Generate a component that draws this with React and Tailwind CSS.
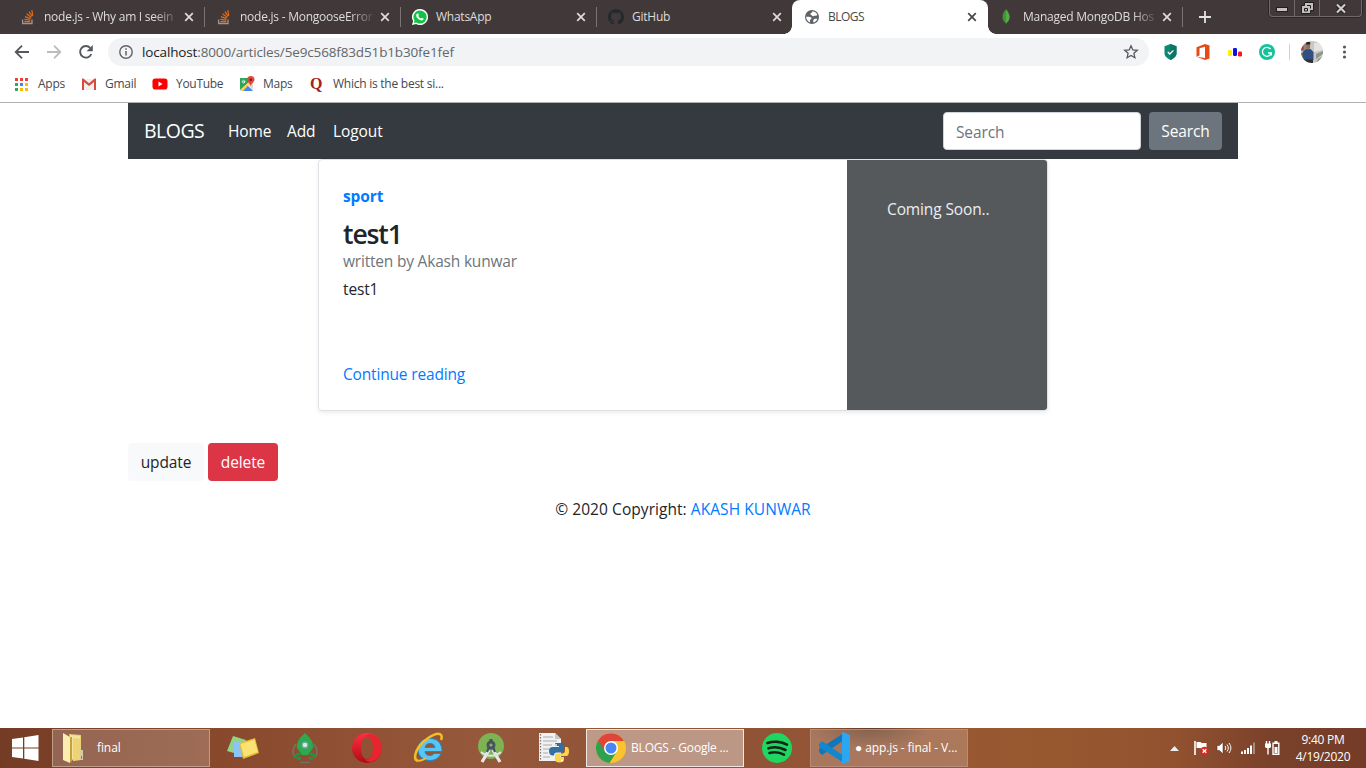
import React from "react";

const X = ({ className }) => (
  <svg className={className} viewBox="0 0 10 10" width="10" height="10">
    <path d="M1.2 1.2l7.6 7.6M8.8 1.2L1.2 8.8" stroke="currentColor" strokeWidth="1.7" />
  </svg>
);

const StackIcon = () => (
  <svg width="16" height="16" viewBox="0 0 16 16">
    <path d="M2.6 10.5v4h9.4v-4" fill="none" stroke="#9a9693" strokeWidth="1.3" />
    <path d="M4.3 12.6h6M4.4 10.4l6 .8M5 7.6l5.6 2M6.6 4.8l4.7 3.6M9 2.6l3.2 4.8M11.8 1.2l1 5.4" stroke="#e06c1c" strokeWidth="1.2" fill="none" />
  </svg>
);

const WhatsAppIcon = () => (
  <svg width="16" height="16" viewBox="0 0 24 24">
    <path d="M12 0a12 12 0 0 0-10.300 18.100L0 24l6.100-1.600A12 12 0 1 0 12 0z" fill="#fff" />
    <path d="M12 2.200a9.800 9.800 0 0 0-8.200 15.200l-1 3.700 3.800-1A9.800 9.800 0 1 0 12 2.200z" fill="#12c245" />
    <path d="M8.300 6.600c.6-.3 1 0 1.200.5l.8 1.900c.1.500-.8 1.200-.9 1.600.7 1.700 2.200 3 4 3.700.5 0 1-1.200 1.500-1.300l2.200 1.100c.5.300.2 1.500-.2 2-1 1-2.500 1.200-3.900.7-3.300-1.100-5.800-3.500-6.700-6.400-.3-1.500.5-3 2-3.800z" fill="#fff" />
  </svg>
);

const GitHubIcon = () => (
  <svg width="16" height="16" viewBox="0 0 16 16">
    <path
      fill="#24292e"
      d="M8 0C3.580 0 0 3.580 0 8c0 3.540 2.290 6.530 5.470 7.590.4.070.55-.17.55-.38 0-.19-.01-.82-.01-1.490-2.010.37-2.530-.49-2.690-.94-.09-.23-.48-.94-.82-1.130-.28-.15-.68-.52-.01-.53.63-.01 1.080.58 1.230.82.72 1.210 1.870.87 2.330.66.070-.52.28-.87.51-1.070-1.780-.2-3.640-.89-3.640-3.950 0-.87.31-1.590.82-2.150-.08-.2-.36-1.020.08-2.120 0 0 .67-.21 2.200.82A7.600 7.600 0 0 1 8 3.860c.68 0 1.360.09 2 .27 1.530-1.040 2.200-.82 2.200-.82.44 1.100.16 1.920.08 2.120.51.56.82 1.270.82 2.150 0 3.070-1.870 3.750-3.650 3.950.29.25.54.73.54 1.480 0 1.070-.01 1.930-.01 2.200 0 .21.15.46.55.38A8 8 0 0 0 16 8c0-4.420-3.580-8-8-8z"
    />
  </svg>
);

const GlobeIcon = () => (
  <svg width="16" height="16" viewBox="0 0 16 16">
    <circle cx="8" cy="8" r="7" fill="#5f6368" />
    <path d="M8.800 2.200c2 .3 3.600 1.500 4.400 3.200-.4 1.300-1.200 1.500-2 1.300-1-.2-1.200.6-2.200.6C7.800 7.200 7.900 6 6.900 5.800c-.9-.3-.6-1.500.3-1.800.9-.3.7-1.300 1.600-1.800z" fill="#fff" />
    <path d="M2.100 7.800c1.300-.2 4.300-.3 5.200.8.700 1-.2 1.600-.9 2-.7.500-.3 1.500-.3 2.800C3.800 12.700 2.200 10.500 2.100 7.800zM10 10.300c1.400-.8 2.600-.6 3.300-.3-.6 1.600-1.900 2.900-3.500 3.500-.8-1-.9-2.500.2-3.200z" fill="#fff" />
  </svg>
);

const MongoIcon = () => (
  <svg width="16" height="16" viewBox="0 0 16 16">
    <path d="M7 .3C5.300 2.400 3.500 4.500 3.500 8c0 3 1.700 4.800 3.200 6l.3 1.700.3-1.700c1.500-1.200 3.200-3 3.200-6C10.500 4.500 8.200 2.400 7 .3z" fill="#419437" />
    <path d="M7 .3v15.400l.3-1.700c1.500-1.200 3.200-3 3.200-6C10.500 4.500 8.200 2.400 7 .3z" fill="#57ab47" />
  </svg>
);

const tabs = [
  { title: "node.js - Why am I seein", icon: <StackIcon />, fit: "tracking-[-0.25px]", fade: true },
  { title: "node.js - MongooseError", icon: <StackIcon />, fit: "tracking-[-0.25px]", fade: true },
  { title: "WhatsApp", icon: <WhatsAppIcon />, fit: "tracking-[-0.25px]" },
  { title: "GitHub", icon: <GitHubIcon />, fit: "tracking-[-0.25px]" },
  { title: "BLOGS", icon: <GlobeIcon />, active: true, fit: "tracking-[-0.5px]" },
  { title: "Managed MongoDB Hos", icon: <MongoIcon />, fit: "tracking-[-0.25px]", fade: true, last: true },
];

function Tab({ tab, divider }) {
  const base = "relative flex h-[34px] shrink-0 items-center";
  const box = tab.active
    ? "w-[196px] rounded-t-[8px] bg-white pl-3 text-[#45494d]"
    : tab.last
      ? "w-[195px] pl-[11px] text-[#dedcdb]"
      : "w-[196px] pl-3 text-[#dedcdb]";
  const label = tab.fade
    ? "ml-2 w-[133px] whitespace-nowrap text-[12px] leading-4 [mask-image:linear-gradient(to_right,#000_110px,transparent_136px)]"
    : "ml-2 w-[133px] whitespace-nowrap text-[12px] leading-4";
  return (
    <div className={`${base} ${box}`}>
      {tab.active && (
        <>
          <div className="absolute bottom-0 -left-2 size-2 bg-[radial-gradient(circle_at_0_0,#413939_7.5px,#fff_8px)]" />
          <div className="absolute -right-2 bottom-0 size-2 bg-[radial-gradient(circle_at_100%_0,#413939_7.5px,#fff_8px)]" />
        </>
      )}
      {tab.icon}
      <div className={label}>
        <span className={tab.fit}>{tab.title}</span>
      </div>
      <X className={tab.active || tab.last ? "ml-[6px] shrink-0" : "ml-[7px] shrink-0"} />
      {divider && <div className={tab.last ? "absolute right-0 top-[7px] h-5 w-px bg-[#7a7474]" : "absolute -right-px top-[7px] h-5 w-px bg-[#7a7474]"} />}
    </div>
  );
}

function WindowControls() {
  return (
    <div className="absolute right-1 top-0 flex h-[17px] w-[93px] rounded-b-[4px] border border-t-0 border-[#6f6a69] text-[#c9c7c6] shadow-[0_0_0_1px_#2c2727]">
      <div className="flex w-[25px] items-center justify-center border-r border-[#6f6a69] pt-[3px]">
        <svg width="12" height="5" viewBox="0 0 12 5"><rect x=".5" y=".5" width="11" height="4" fill="#c4c2c1" stroke="#221e1e" /></svg>
      </div>
      <div className="flex w-[25px] items-center justify-center border-r border-[#6f6a69] pr-px">
        <svg width="14" height="14" viewBox="0 0 14 14">
          <path d="M4.500 1.500h9v8h-3v3h-9v-8h3z" fill="#c4c2c1" stroke="#221e1e" />
          <path d="M4.500 7.500h3v2.500h-3zM7 4.500h3.500v3" fill="none" stroke="#221e1e" />
        </svg>
      </div>
      <div className="flex grow items-center justify-center">
        <svg width="12" height="11" viewBox="0 0 12 11">
          <path d="M2 1.500l8 8M10 1.500l-8 8" stroke="#221e1e" strokeWidth="4" />
          <path d="M2 1.500l8 8M10 1.500l-8 8" stroke="#d0cecd" strokeWidth="2.200" />
        </svg>
      </div>
    </div>
  );
}

function TabStrip() {
  return (
    <div className="relative flex h-[34px] bg-[#413939] pl-2">
      {tabs.map((t, i) => (
        <Tab key={i} tab={t} divider={i !== 3 && i !== 4} />
      ))}
      <div className="flex h-[34px] items-center pl-[16px]">
        <svg width="12" height="12" viewBox="0 0 12 12"><path d="M6 0v12M0 6h12" stroke="#e4e2e1" strokeWidth="1.800" /></svg>
      </div>
      <WindowControls />
    </div>
  );
}

function Toolbar() {
  return (
    <div className="flex h-9 items-center bg-white">
      <svg className="ml-[14px]" width="16" height="16" viewBox="0 0 16 16"><path d="M15 8H2M8 1.700L1.700 8 8 14.300" fill="none" stroke="#55595e" strokeWidth="1.800" /></svg>
      <svg className="ml-4" width="16" height="16" viewBox="0 0 16 16"><path d="M1 8h13M8 1.700L14.300 8 8 14.300" fill="none" stroke="#babcbe" strokeWidth="1.800" /></svg>
      <svg className="ml-4" width="16" height="16" viewBox="0 0 16 16">
        <path d="M13.300 10A5.800 5.800 0 1 1 12.300 4" fill="none" stroke="#55595e" strokeWidth="1.900" />
        <path d="M14.800 1v6.200H8.600z" fill="#55595e" />
      </svg>
      <div className="ml-[14px] flex h-7 w-[1041px] items-center rounded-full bg-[#f1f3f4] pl-[11px]">
        <svg width="14" height="14" viewBox="0 0 14 14">
          <circle cx="7" cy="7" r="6.200" fill="none" stroke="#5f6368" strokeWidth="1.400" />
          <path d="M7 6v4.500M7 3.300v1.500" stroke="#5f6368" strokeWidth="1.500" />
        </svg>
        <div className="ml-[9px] whitespace-nowrap text-[13.500px] leading-5 tracking-[-0.14px] text-[#63676b]">
          <span className="text-[#202124]">localhost</span>:8000/articles/5e9c568f83d51b1b30fe1fef
        </div>
        <svg className="ml-auto mr-[10px]" width="16" height="16" viewBox="0 0 16 16">
          <path d="M8 1.800l1.800 4.100 4.500.4-3.400 3 1 4.400L8 11.400l-3.900 2.300 1-4.400-3.400-3 4.500-.4z" fill="none" stroke="#55595e" strokeWidth="1.300" />
        </svg>
      </div>
      <svg className="ml-[13px]" width="16" height="16" viewBox="0 0 16 16">
        <path d="M8.500 0l6 2.300v7.200c0 3-3 5-6 6.500-3-1.500-6-3.500-6-6.500V2.300z" fill="#0f8873" />
        <path d="M8.500 0l6 2.300v7.200c0 3-3 5-6 6.500z" fill="#0b7664" />
        <path d="M5.800 8l2 2 3.600-3.600" stroke="#fff" strokeWidth="1.300" fill="none" />
      </svg>
      <svg className="ml-[17px]" width="16" height="16" viewBox="0 0 16 16">
        <path d="M1.500 3.300L10 0l4.500 1.400v13.200L10 16l-8.500-3.200L10 14V2.700L4.500 4.200v7.300l-3 1.300z" fill="#e64a19" />
      </svg>
      <svg className="ml-4" width="16" height="16" viewBox="0 0 16 16">
        <rect x="1" y="6" width="4" height="6" rx="1.200" fill="#ffee00" />
        <rect x="6" y="4" width="4" height="8" rx="1.200" fill="#0b12e8" />
        <rect x="11" y="7.500" width="4" height="5" rx="1.200" fill="#f01a20" />
      </svg>
      <svg className="ml-4" width="16" height="16" viewBox="0 0 16 16">
        <circle cx="8" cy="8" r="8" fill="#15c39a" />
        <path d="M11.500 5A4.500 4.500 0 1 0 12.300 9H9M12.300 8.300v3.200" fill="none" stroke="#fff" strokeWidth="1.300" />
      </svg>
      <div className="ml-[14px] h-4 w-px bg-[#cfd1d3]" />
      <svg className="ml-[11px]" width="22" height="22" viewBox="0 0 22 22">
        <clipPath id="avatar"><circle cx="11" cy="11" r="11" /></clipPath>
        <g clipPath="url(#avatar)">
          <path d="M0 0h22v22H0z" fill="#c8c9c3" />
          <path d="M0 0h6v10H0z" fill="#8b8978" />
          <path d="M13 2h9v7l-9 2z" fill="#e4e5e1" />
          <path d="M15 13l7-3v3l-7 5zM17 18l5-3v7h-7z" fill="#8f948c" />
          <path d="M0 12h4v10H0z" fill="#6b7361" />
          <path d="M0 5h2.500v4H0z" fill="#c22b50" />
          <path d="M1.500 11l4-3h4L12.500 11v8H2.500z" fill="#2f4f86" />
          <path d="M3 18.500h9V22H3z" fill="#30302f" />
          <path d="M5.500 3h3.500v4L7.500 9l-2-2z" fill="#9a6a52" />
          <path d="M5.200 1h4v2.500h-4z" fill="#2c2422" />
        </g>
      </svg>
      <svg className="ml-[13px]" width="16" height="16" viewBox="0 0 16 16" fill="#55595e">
        <circle cx="8.500" cy="3" r="1.600" /><circle cx="8.500" cy="8" r="1.600" /><circle cx="8.500" cy="13" r="1.600" />
      </svg>
    </div>
  );
}

function Bookmarks() {
  const colors = ["#ea4335", "#ea4335", "#ea4335", "#34a853", "#4285f4", "#fbbc05", "#34a853", "#fbbc05", "#fbbc05"];
  return (
    <div className="flex h-[33px] items-center whitespace-nowrap border-b border-[#b2b0b0] bg-white pb-[4px] text-[12px] leading-4 tracking-[-0.25px] text-[#45494d]">
      <div className="ml-[15px] grid grid-cols-3 gap-[2px]">
        {colors.map((c, i) => (
          <div key={i} className="size-[3px]" style={{ backgroundColor: c }} />
        ))}
      </div>
      <span className="ml-[10px] w-[27px]">Apps</span>
      <svg className="ml-4" width="16" height="16" viewBox="0 0 16 16">
        <path d="M1 3h14v11H1z" fill="#f0eeee" />
        <path d="M3 14V6l5 4 5-4v8h2V2.500h-1.300L8 7.300 2.300 2.500H1V14z" fill="#d54b3d" />
      </svg>
      <span className="ml-2 w-[31px]">Gmail</span>
      <svg className="ml-4" width="16" height="16" viewBox="0 0 16 16">
        <rect x=".5" y="2.500" width="15" height="11" rx="2.800" fill="#f00" /><path d="M6.500 5.600v4.800l4-2.400z" fill="#fff" />
      </svg>
      <span className="ml-2 w-[47px] tracking-[-0.3px]">YouTube</span>
      <svg className="ml-4" width="16" height="16" viewBox="0 0 16 16">
        <rect x="1" y="2" width="13" height="13" rx="1" fill="#e8eaea" />
        <path d="M1 2h9v4L1 14z" fill="#2da457" /><path d="M1.500 15L8 9l6 6z" fill="#4b84ee" /><path d="M2 13.500L12 4l1.300 1.300L4 15H2z" fill="#fbd24a" />
        <path d="M9.500 9l4.500 5V8z" fill="#d8dadb" />
        <path d="M11.800 0a3.700 3.700 0 0 0-3.700 3.800c0 2.300 3 3.500 3.700 6.400.7-2.900 3.700-4.100 3.700-6.400A3.700 3.700 0 0 0 11.800 0z" fill="#dd4b3e" />
        <circle cx="11.800" cy="3.700" r="1.300" fill="#7c1d18" />
        <path d="M6.500 5.300H5v.7h.8a1.300 1.300 0 1 1-.3-1.200" stroke="#fff" strokeWidth=".8" fill="none" />
      </svg>
      <span className="ml-2 w-[29px]">Maps</span>
      <div className="ml-4 mr-px flex size-4 items-center justify-center font-['Liberation_Serif',serif] text-[16px] font-bold text-[#a52218]">Q</div>
      <span className="ml-2">Which is the best si...</span>
    </div>
  );
}

function Page() {
  return (
    <div className="h-[625px] bg-white text-[15.500px] leading-6 tracking-[-0.13px] text-[#212529]">
      <div className="mx-auto w-[1110px]">
        <nav className="flex h-14 items-center bg-[#343a40] px-4 text-white">
          <span className="w-[60px] whitespace-nowrap text-[19.500px] leading-[30px] tracking-[-0.5px]">BLOGS</span>
          <span className="ml-6 w-[43px]">Home</span>
          <span className="ml-4 w-[29px]">Add</span>
          <span className="ml-[17px] grow tracking-[-0.1px]">Logout</span>
          <div className="h-[38px] w-[198px] rounded-[4px] border border-[#ced4da] bg-white px-3 pt-[7px] text-[#6c757d]">Search</div>
          <button className="ml-2 h-[38px] w-[73px] rounded-[4px] bg-[#6c757d]">Search</button>
        </nav>
        <div className="ml-[190px] flex h-[252px] w-[730px] overflow-hidden rounded-[4px] border border-[#dee2e6] shadow-[0_2px_4px_rgba(0,0,0,0.075)]">
          <div className="flex grow flex-col p-6">
            <strong className="mb-2 font-bold text-[#007bff]">sport</strong>
            <h3 className="h-[33px] pt-[2px] text-[26.500px] font-semibold leading-8 tracking-[-1.1px]">test1</h3>
            <div className="mb-1 tracking-[-0.2px] text-[#6c757d]">written by Akash kunwar</div>
            <p>test1</p>
            <a className="mt-auto tracking-[-0.17px] text-[#007bff]">Continue reading</a>
          </div>
          <div className="w-[200px] bg-[#55595c] pl-10 pt-[37px] text-[#eceeef]">Coming Soon..</div>
        </div>
        <div className="mt-8 flex gap-1">
          <button className="h-[38px] w-[76px] rounded-[4px] bg-[#f8f9fa]">update</button>
          <button className="h-[38px] w-[70px] rounded-[4px] bg-[#dc3545] text-white">delete</button>
        </div>
        <footer className="py-4 text-center tracking-[0.06px]">
          © 2020 Copyright: <a className="text-[#007bff]">AKASH KUNWAR</a>
        </footer>
      </div>
    </div>
  );
}

function Taskbar() {
  return (
    <div className="flex h-10 items-center whitespace-nowrap bg-[radial-gradient(60px_22px_at_870px_0,#5a351fcc,transparent),linear-gradient(90deg,#753c25_0,#8a4a2d_18%,#96583b_35%,#8f5235_52%,#945636_62%,#98582f_76%,#925230_86%,#7a412a_93%,#743c27_100%)] text-[12px] leading-4 tracking-[-0.25px] text-white">
      <svg className="ml-3" width="27" height="26" viewBox="0 0 27 26" fill="#fff">
        <path d="M0 4l11-1.600v10H0zM12.300 2.200L26.500 0v12.400H12.300zM0 13.600h11v10L0 22zM12.300 13.600h14.200V26l-14.200-2.200z" />
      </svg>
      <div className="ml-[13px] flex h-[38px] w-[158px] items-center border border-[#c09c8b] bg-[#ffffff33] pl-2">
        <svg width="28" height="32" viewBox="0 0 28 32">
          <path d="M8 2l12 1v24l-8 2z" fill="#e8cf70" />
          <path d="M9 3l10 1v22l-9 2z" fill="#f4e39b" />
          <path d="M2 1l7 4v26l-7-3z" fill="#fbeeb0" />
          <path d="M9 5h2v24l-2 2z" fill="#c8a13c" />
          <path d="M12 6l8 1v21l-8 1z" fill="#edd376" />
          <path d="M19 18h3v10h-3z" fill="#d7cc9e" /><path d="M20 24h1v3h-1z" fill="#478bd8" />
        </svg>
        <span className="ml-2 tracking-[-0.1px]">final</span>
      </div>
      <svg className="ml-[17px]" width="32" height="26" viewBox="0 0 32 26">
        <path d="M6 1l13 4-5 15L0 16z" fill="#8fd487" />
        <path d="M7 7h15v15H7z" fill="#8cc5f5" />
        <path d="M12 8l16-5 4 15-16 6z" fill="#e3bd35" /><path d="M13.500 9l14-4.500 3.200 12.500-13.700 5z" fill="#fae273" />
      </svg>
      <svg className="ml-[33px]" width="26" height="32" viewBox="0 0 26 32">
        <path d="M4 12c-4 6-4 10-1 13M22 12c4 6 4 10 1 13" stroke="#79716a" strokeWidth="1.500" fill="none" />
        <path d="M13 1c6 5 9 10 8 15l-5 7h-6l-5-7C4 11 7 6 13 1z" fill="#2fa84f" />
        <path d="M3 26c0-4 3-3 6-5M23 26c0-4-3-3-6-5M5 27c1-1 2-1 4-1M21 27c-1-1-2-1-4-1" stroke="#239343" strokeWidth="2.500" fill="none" />
        <circle cx="13" cy="13" r="3" fill="#d5e9e2" stroke="#65a79a" strokeWidth="1.300" />
        <path d="M8 30.500h10" stroke="#75706b" strokeWidth="1.200" />
      </svg>
      <svg className="ml-[34px]" width="30" height="30" viewBox="0 0 30 30">
        <defs><linearGradient id="op" x2="0" y2="1"><stop stopColor="#ff3040" /><stop offset="1" stopColor="#b00b15" /></linearGradient></defs>
        <path fillRule="evenodd" d="M15 0a15 15 0 1 0 0 30 15 15 0 0 0 0-30zm0 4c4 0 6 5 6 11s-2 11-6 11-6-5-6-11 2-11 6-11z" fill="url(#op)" />
        <path d="M19 1c7 2 11 8 11 14s-4 12-11 14c-3 0-5-1-6-3 5 2 8-4 8-11S18 2 13 4c1-2 3-3 6-3z" fill="#e62530" />
      </svg>
      <svg className="ml-[31px]" width="32" height="32" viewBox="0 0 32 32">
        <path d="M17 6.500c-7 0-12 4.500-12 11s5 11 12 11c5 0 9-2.500 11-7h-7c-1 1.500-2.500 2-4 2-3 0-5-1.500-5-4h17c0-8-4-13-12-13zm-5 9c.5-2.500 2-4 5-4s4.500 1.500 5 4z" fill="#59c5f4" stroke="#1a8ac9" strokeWidth="1" />
        <path d="M4.500 29C0 27 2 18 10 10 18 2.500 26 0 28 3c1 1.500 1 3 0 5" fill="none" stroke="#f5bd23" strokeWidth="2.500" />
        <path d="M4 28c2 2 6 0 9-2" fill="none" stroke="#f5bd23" strokeWidth="2" />
      </svg>
      <svg className="ml-[32px]" width="28" height="32" viewBox="0 0 28 32">
        <circle cx="14" cy="14" r="13" fill="#7db352" />
        <path d="M12 18L5 30M16 18l7 12" stroke="#e7e9ea" strokeWidth="3.200" /><path d="M4 20c6 5 14 5 20 0" fill="none" stroke="#dfe3e4" strokeWidth="2.200" />
        <circle cx="14" cy="13" r="4.500" fill="#46565d" /><path d="M12.500 7h3v4h-3z" fill="#46565d" /><circle cx="14" cy="13" r="1.600" fill="#8bae6e" />
        <path d="M12 15l-2 5M16 15l2 5" stroke="#46565d" strokeWidth="2.200" />
      </svg>
      <svg className="ml-[33px]" width="31" height="32" viewBox="0 0 31 32">
        <path d="M1 1h16l6 6v22H1z" fill="#f1f1f1" /><path d="M17 1v6h6z" fill="#c6c6c6" />
        <path d="M2.500 2v27" stroke="#777" strokeWidth="1.300" strokeDasharray="1.500 1.500" />
        <path d="M5 5h10M5 9h14M5 13h9M5 17h6M5 21h5M5 25h7" stroke="#aaa" />
        <path d="M18 11h5c2 0 3 1 3 3v4c0 2-1 2.500-3 2.500h-4c-2 0-3 1-3 3h-1c-3 0-4-2-4-4.500s1-4 4-4h6v-1h-4v-1c0-1.500 0-2 1-2z" fill="#356f9f" />
        <path d="M27 15h1.500c2 0 2.500 2 2.500 4.500s-1 4.500-3 4.500h-6v1h4v2.500c0 2-1.500 3-4.500 3s-4.500-1-4.500-3V24c0-2 1-2.500 3-2.500h4c2 0 3-1 3-3z" fill="#fbd448" />
        <circle cx="18" cy="13" r=".9" fill="#fff" /><circle cx="24" cy="28.500" r=".9" fill="#fff" />
      </svg>
      <div className="ml-[17px] flex h-[38px] w-[158px] items-center border border-[#f1e7e2] bg-[#ffffff66] pl-[9px]">
        <svg width="30" height="30" viewBox="0 0 30 30">
          <circle cx="15" cy="15" r="15" fill="#fbc32d" />
          <path d="M15 15L2 7.500A15 15 0 0 0 13.500 30L21 18z" fill="#2ea14c" />
          <path d="M2 7.500A15 15 0 0 1 28 8H15L9 18z" fill="#dd4638" />
          <circle cx="15" cy="15" r="7" fill="#fff" /><circle cx="15" cy="15" r="5.500" fill="#4687f2" />
        </svg>
        <span className="ml-[5px] tracking-[-0.18px]">BLOGS - Google ...</span>
      </div>
      <svg className="ml-[18px]" width="30" height="30" viewBox="0 0 30 30">
        <circle cx="15" cy="15" r="15" fill="#1ed760" />
        <path d="M5.500 10c6-2 14-1.500 19.500 1.700M6.500 15.300c5.500-1.700 12-1 17 1.700M7.500 20c5-1.300 10-.8 14.500 1.700" stroke="#16221a" strokeWidth="2.600" strokeLinecap="round" fill="none" />
      </svg>
      <div className="ml-[18px] flex h-[38px] w-[158px] items-center border border-[#b78d79] bg-[#ffffff33] pl-[7px]">
        <svg width="33" height="32" viewBox="0 0 33 32">
          <path d="M1 20l3 3 22-15V1L1 17z" fill="#1277ba" />
          <path d="M1 12l3-3 22 15v7L1 15z" fill="#1387cd" />
          <path d="M25 0l7 3v26l-7 3-1-1V1z" fill="#2aa6f2" />
        </svg>
        <span className="ml-[4px] tracking-[-0.1px]">● app.js - final - V...</span>
      </div>
      <div className="ml-auto flex items-center">
        <svg width="9" height="5" viewBox="0 0 9 5"><path d="M4.500 0L9 5H0z" fill="#eee" /></svg>
        <svg className="ml-[14px]" width="16" height="16" viewBox="0 0 16 16">
          <path d="M2 1v14" stroke="#fff" strokeWidth="1.600" /><path d="M3.500 2h4l1 1h5v6H8.500L7.500 8h-4z" fill="#fff" />
          <circle cx="11.500" cy="11" r="4.200" fill="#dc2723" /><path d="M9.700 9.200l3.600 3.600M13.300 9.200l-3.600 3.600" stroke="#fff" strokeWidth="1.400" />
        </svg>
        <svg className="ml-[7px]" width="16" height="16" viewBox="0 0 16 16">
          <path d="M1 5.500h2.500L7 2v12l-3.500-3.500H1z" fill="#fff" stroke="#3d241b" strokeWidth=".5" />
          <path d="M9 6c1 1.500 1 2.500 0 4M11 4.500c1.800 2.500 1.800 4.500 0 7M13 3c2.500 3.500 2.500 6.500 0 10" stroke="#fff" fill="none" />
        </svg>
        <svg className="ml-[8px]" width="16" height="16" viewBox="0 0 16 16" fill="#fff">
          <path d="M1 11.500h2V14H1zM4 10h2v4H4zM7 8h2v6H7zM10 5.500h2V14h-2z" /><path d="M13 2.500h2V14h-2z" fill="#a48d82" />
        </svg>
        <svg className="ml-[8px]" width="17" height="16" viewBox="0 0 17 16">
          <path d="M2.500 1v3M5.500 1v3M4 7v7.500" stroke="#fff" strokeWidth="1.400" /><path d="M1 3.500h6V7l-1 1H2L1 7z" fill="#fff" />
          <path d="M9 3.200h5.800v11H9zM10.500 1.800h3" fill="none" stroke="#fff" strokeWidth="1.400" /><path d="M10.500 7h3v6h-3z" fill="#fff" />
        </svg>
      </div>
      <div className="ml-[9px] mr-[10px] w-[66px] text-center leading-[17px]">
        <div>9:40 PM</div>
        <div>4/19/2020</div>
      </div>
    </div>
  );
}

export default function App() {
  return (
    <div className="h-[768px] w-[1366px] overflow-hidden font-['Open_Sans',sans-serif]">
      <TabStrip />
      <Toolbar />
      <Bookmarks />
      <Page />
      <Taskbar />
    </div>
  );
}
